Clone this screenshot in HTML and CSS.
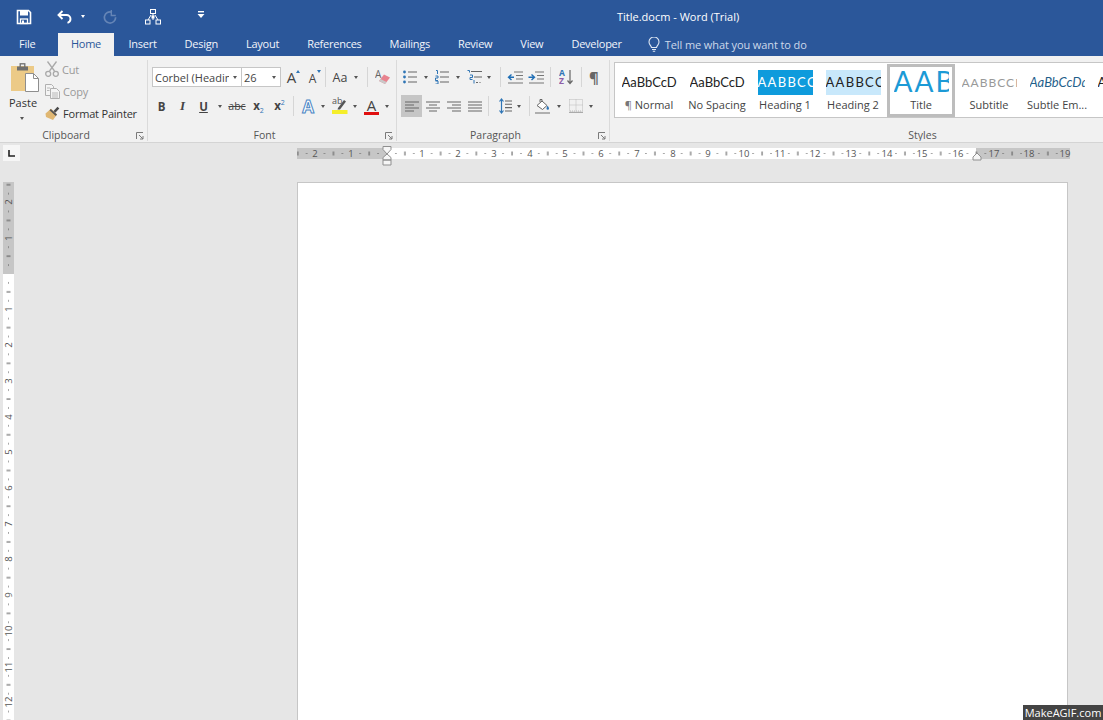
FILE: index.html
```html
<!DOCTYPE html>
<html lang="en">
<head>
<meta charset="utf-8">
<title>Title.docm - Word (Trial)</title>
<link rel="stylesheet" href="styles.css">
</head>
<body>
<div class="app">
  <header class="titlebar">
    <svg class="qa qa-save" width="16" height="16" viewBox="0 0 16 16"><path d="M1.5 1.5h11l2 2v11h-13z" fill="none" stroke="#fff" stroke-width="1.6"/><rect x="4" y="2" width="8" height="4.5" fill="#fff"/><rect x="4.5" y="10" width="7" height="4.5" fill="none" stroke="#fff" stroke-width="1.3"/><rect x="6" y="11.5" width="2" height="3" fill="#fff"/></svg>
    <svg class="qa qa-undo" width="16" height="14" viewBox="0 0 16 14"><path d="M5.5 1 1.5 5l4 4" fill="none" stroke="#fff" stroke-width="1.9"/><path d="M2 5h7.5a4 4 0 0 1 4 4v0a4 4 0 0 1-3 3.8" fill="none" stroke="#fff" stroke-width="1.9"/></svg>
    <span class="caret caret-white qa-undo-caret"></span>
    <svg class="qa qa-redo" width="14" height="14" viewBox="0 0 14 14"><path d="M9 2.2a5.6 5.6 0 1 0 3.6 5" fill="none" stroke="#6585b6" stroke-width="1.7"/><path d="M8.3 0v5.5h4.5" fill="none" stroke="#6585b6" stroke-width="1.4"/></svg>
    <svg class="qa qa-net" width="16" height="16" viewBox="0 0 16 16"><g fill="none" stroke="#fff"><rect x="5.5" y=".5" width="5" height="4"/><rect x=".5" y="11" width="4.5" height="4"/><rect x="11" y="11" width="4.5" height="4"/><path d="M8 4.5v6.5M3 11 6 6M13 11l-3-5"/></g><rect x="6.5" y="6.5" width="3" height="3" fill="#fff"/></svg>
    <svg class="qa qa-more" width="8" height="7" viewBox="0 0 8 7"><rect x="1" y="0" width="6" height="1.4" fill="#fff"/><path d="M.5 3h7L4 7z" fill="#fff"/></svg>
    <div class="doc-title">Title.docm - Word (Trial)</div>
  </header>

  <nav class="tabs">
    <span class="tab tab-file">File</span>
    <span class="tab tab-active">Home</span>
    <span class="tab">Insert</span>
    <span class="tab">Design</span>
    <span class="tab">Layout</span>
    <span class="tab">References</span>
    <span class="tab">Mailings</span>
    <span class="tab">Review</span>
    <span class="tab">View</span>
    <span class="tab">Developer</span>
    <span class="tell">
      <svg width="12" height="15" viewBox="0 0 12 15"><path d="M3.5 10.5C3 8.5 1 7.6 1 5a5 5 0 0 1 10 0c0 2.6-2 3.500-2.500 5.500z" fill="none" stroke="#dfe7f3" stroke-width="1.100"/><path d="M4 12.500h4M4.800 14.300h2.400" stroke="#dfe7f3" stroke-width="1.100"/></svg>
      <span>Tell me what you want to do</span>
    </span>
  </nav>

  <section class="ribbon">
    <div class="group group-clipboard">
      <div class="clip-body">
        <div class="paste">
          <svg width="30" height="30" viewBox="0 0 30 30"><rect x="1" y="3" width="23" height="25" fill="#ecca87"/><rect x="7" y="3.500" width="11" height="4" fill="#6f6f6f"/><rect x="10.200" y=".8" width="4.600" height="4" fill="none" stroke="#6f6f6f" stroke-width="1.300"/><path d="M15.500 10.500h8l5 5v13h-13z" fill="#fff" stroke="#8e8e8e"/><path d="M23.500 10.500v5h5" fill="none" stroke="#8e8e8e"/></svg>
          <span class="paste-label">Paste</span>
          <span class="caret caret-dark"></span>
        </div>
        <div class="clip-cmds">
          <div class="clip-row off">
            <svg width="14" height="16" viewBox="0 0 14 16"><g fill="none" stroke="#a9a9a9" stroke-width="1.300"><path d="M2.500 .5 9.500 10M11.500 .5 4.500 10"/><circle cx="3.200" cy="12.800" r="2.500"/><circle cx="10.800" cy="12.800" r="2.500"/></g></svg>
            <span>Cut</span>
          </div>
          <div class="clip-row off">
            <svg width="15" height="15" viewBox="0 0 15 15"><g fill="#f4f4f4" stroke="#b0b0b0"><path d="M.5 .5h6l2 2v9h-8z"/><path d="M5.500 4.500h6l3 3v7h-9z"/></g><path d="M2 4h3M2 6.500h2.500M7 9h6M7 11h6M7 13h6" stroke="#b8b8b8"/></svg>
            <span>Copy</span>
          </div>
          <div class="clip-row">
            <svg width="15" height="15" viewBox="0 0 15 15"><path d="M8.500 5 12.500 .8l1.800 1.800-4 4.200z" fill="#4a4a4a"/><path d="M6 2.800 12 8.500 8 14 1 11 .5 7.500z" fill="#e0b772"/><path d="M5.800 3 12 8.600 10.800 10 4.500 4.300z" fill="#555"/></svg>
            <span>Format Painter</span>
          </div>
        </div>
      </div>
      <div class="group-label">Clipboard
        <svg class="launcher" width="8" height="8" viewBox="0 0 8 8"><path d="M.5 7V.5H7M3 3l4 4M7 4v3H4" fill="none" stroke="#7a7a7a"/></svg>
      </div>
    </div>

    <div class="group group-font">
      <div class="rows">
        <div class="row row-top">
          <div class="combo combo-name"><span class="combo-text">Corbel (Headings)</span><span class="caret caret-dark"></span></div>
          <div class="combo combo-size"><span class="combo-text">26</span><span class="caret caret-dark"></span></div>
          <span class="glyph size-a w21">A<i class="tri tri-up"></i></span>
          <span class="glyph size-b w21">A<i class="tri tri-down"></i></span>
          <i class="sep sep-a"></i>
          <span class="glyph aa">Aa</span><span class="caret caret-dark"></span>
          <i class="sep sep-b"></i>
          <svg class="eraser" width="16" height="16" viewBox="0 0 16 16"><text x="0" y="9" class="mini-a">A</text><path d="M9 5.500 15 8.500 10 15 4 12z" fill="#e8838f"/><path d="M4 12l6 3 1.500-2-6-3z" fill="#c9c9c9"/></svg>
        </div>
        <div class="row row-bottom">
          <span class="glyph fmt w21 bold">B</span>
          <span class="glyph fmt w21 ital">I</span>
          <span class="glyph fmt w21 under">U</span>
          <span class="cw"><span class="caret caret-dark"></span></span>
          <span class="glyph abc">abc</span>
          <span class="script w21">x<sub>2</sub></span>
          <span class="script w21">x<sup>2</sup></span>
          <i class="sep sep-c"></i>
          <span class="glyph effect">A</span><span class="cw"><span class="caret caret-dark"></span></span>
          <svg class="hl" width="18" height="18" viewBox="0 0 18 18"><text x="1" y="7" class="mini-ab">ab</text><path d="M7 11 13 3l2 1.500-6 8H6.500z" fill="#555"/><rect x="1" y="13" width="15.500" height="4" fill="#f5ee2a"/></svg>
          <span class="cw"><span class="caret caret-dark"></span></span>
          <span class="glyph fontcolor">A</span><span class="cw"><span class="caret caret-dark"></span></span>
        </div>
      </div>
      <div class="group-label">Font
        <svg class="launcher" width="8" height="8" viewBox="0 0 8 8"><path d="M.5 7V.5H7M3 3l4 4M7 4v3H4" fill="none" stroke="#7a7a7a"/></svg>
      </div>
    </div>

    <div class="group group-para">
      <div class="rows">
        <div class="row row-top">
          <svg class="p-icon m6" width="14" height="14" viewBox="0 0 14 14"><path d="M5 2h9M5 7h9M5 12h9" stroke="#666" stroke-width="1.200"/><g fill="#2f75b5"><circle cx="1.500" cy="2" r="1.400"/><circle cx="1.500" cy="7" r="1.400"/><circle cx="1.500" cy="12" r="1.400"/></g></svg>
          <span class="cw c1"><span class="caret caret-dark"></span></span>
          <svg class="p-icon" width="14" height="14" viewBox="0 0 14 14"><path d="M5 2h9M5 7h9M5 12h9" stroke="#666" stroke-width="1.200"/><g stroke="#2f75b5" fill="none"><path d="M1 .5h1.500v3.500M.5 6h2.500v2H.5v2.500H3M.5 11h2.500v3H.5"/></g></svg>
          <span class="cw c1"><span class="caret caret-dark"></span></span>
          <svg class="p-icon" width="15" height="14" viewBox="0 0 15 14"><path d="M4 1.500h11M7 7h8M9 12.500h2M12.500 12.500h1" stroke="#666" stroke-width="1.200"/><path d="M.5 .5h2v2M3 5h2.500v2.500H3v2h2.500M7 10v3.500" stroke="#2f75b5" fill="none"/></svg>
          <span class="cw c0"><span class="caret caret-dark"></span></span>
          <i class="sep sep-d"></i>
          <svg class="p-icon" width="16" height="13" viewBox="0 0 16 13"><path d="M7 1h9M9 4.500h7M9 8h7M1 12h15" stroke="#777" stroke-width="1.200"/><path d="M7 6.200H2M4.500 3.500 1.500 6.200l3 2.800" fill="none" stroke="#1f6eb5" stroke-width="1.400"/></svg>
          <svg class="p-icon m5" width="16" height="13" viewBox="0 0 16 13"><path d="M7 1h9M9 4.500h7M9 8h7M1 12h15" stroke="#777" stroke-width="1.200"/><path d="M.5 6.200h5M3.500 3.500l3 2.700-3 2.800" fill="none" stroke="#1f6eb5" stroke-width="1.400"/></svg>
          <i class="sep sep-e"></i>
          <svg class="p-icon" width="14" height="16" viewBox="0 0 14 16"><text x="0" y="7" class="az az-a">A</text><text x="0" y="15" class="az az-z">Z</text><path d="M11 1v13M8.500 11.500 11 14.500l2.500-3" fill="none" stroke="#666" stroke-width="1.200"/></svg>
          <i class="sep sep-f"></i>
          <span class="pilcrow">¶</span>
        </div>
        <div class="row row-bottom">
          <span class="al al-on"><svg width="14" height="11" viewBox="0 0 14 11"><path d="M0 1h14M0 4h9M0 7h14M0 10h9" stroke="#666" stroke-width="1.100"/></svg></span>
          <span class="al"><svg width="14" height="11" viewBox="0 0 14 11"><path d="M0 1h14M3 4h8M0 7h14M3 10h8" stroke="#666" stroke-width="1.100"/></svg></span>
          <span class="al"><svg width="14" height="11" viewBox="0 0 14 11"><path d="M0 1h14M5 4h9M0 7h14M5 10h9" stroke="#666" stroke-width="1.100"/></svg></span>
          <span class="al"><svg width="14" height="11" viewBox="0 0 14 11"><path d="M0 1h14M0 4h14M0 7h14M0 10h14" stroke="#666" stroke-width="1.100"/></svg></span>
          <i class="sep sep-g"></i>
          <svg class="p-icon" width="13" height="16" viewBox="0 0 13 16"><path d="M6 3h7M6 6.300h7M6 9.600h7M6 13h7" stroke="#666" stroke-width="1.100"/><path d="M2.500 1v14M.5 3.500l2-2.500 2 2.500M.5 12.500l2 2.500 2-2.500" fill="none" stroke="#2f75b5" stroke-width="1.200"/></svg>
          <span class="cw c2"><span class="caret caret-dark"></span></span>
          <i class="sep sep-h"></i>
          <svg class="p-icon" width="16" height="16" viewBox="0 0 16 16"><path d="M2 7.500 7 3l5 4.500-4.500 4z" fill="#fff" stroke="#666"/><path d="M5 4V1.500h2V4" fill="none" stroke="#666"/><path d="M12.500 7.500c1 1.500 1.500 2.200 1.500 3a1 1 0 0 1-2.500 0c0-.8.500-1.500 1-3z" fill="#2f75b5"/><path d="M0 15h15" stroke="#999" stroke-width="1.500"/></svg>
          <span class="cw c3"><span class="caret caret-dark"></span></span>
          <svg class="p-icon" width="14" height="14" viewBox="0 0 14 14"><g fill="none" stroke="#bbb" stroke-dasharray="1 1"><rect x=".5" y=".5" width="13" height="11.500"/><path d="M7 .5v11.500M.5 6h13"/></g><path d="M0 13.300h14" stroke="#999"/></svg>
          <span class="cw c3"><span class="caret caret-dark"></span></span>
        </div>
      </div>
      <div class="group-label">Paragraph
        <svg class="launcher" width="8" height="8" viewBox="0 0 8 8"><path d="M.5 7V.5H7M3 3l4 4M7 4v3H4" fill="none" stroke="#7a7a7a"/></svg>
      </div>
    </div>

    <div class="group group-styles">
      <div class="gallery">
        <div class="style"><div class="pv pv-body">AaBbCcD</div><div class="st-label"><span class="pil">¶</span> Normal</div></div>
        <div class="style"><div class="pv pv-body">AaBbCcD</div><div class="st-label">No Spacing</div></div>
        <div class="style"><div class="pv pv-h1">AABBCC</div><div class="st-label">Heading 1</div></div>
        <div class="style"><div class="pv pv-h2">AABBCC</div><div class="st-label">Heading 2</div></div>
        <div class="style style-on"><div class="pv pv-title">AAB</div><div class="st-label">Title</div></div>
        <div class="style"><div class="pv pv-sub">AABBCCDD</div><div class="st-label">Subtitle</div></div>
        <div class="style"><div class="pv pv-em">AaBbCcDd</div><div class="st-label">Subtle Em...</div></div>
        <div class="style"><div class="pv pv-body pv-last">A</div></div>
      </div>
      <div class="group-label">Styles</div>
    </div>
  </section>

  <div class="rulerbar">
    <div class="tabstop"><svg width="7" height="7" viewBox="0 0 7 7"><path d="M1 0v6h6" fill="none" stroke="#222" stroke-width="1.600"/></svg></div>
    <svg class="hruler" width="813" height="24" viewBox="0 0 813 24">
      <defs>
        <pattern id="hticks" patternUnits="userSpaceOnUse" x="97" y="5" width="35.72" height="11">
          <rect x="8.400" y="5" width="1" height="1" fill="#555"/>
          <rect x="17.400" y="3.500" width="1" height="4" fill="#555"/>
          <rect x="26.300" y="5" width="1" height="1" fill="#555"/>
        </pattern>
      </defs>
      <rect x="7" y="5" width="90" height="11" fill="#c6c6c6"/>
      <rect x="97" y="5" width="589" height="11" fill="#fff"/>
      <rect x="686" y="5" width="94" height="11" fill="#c6c6c6"/>
      <rect x="7" y="5" width="773" height="11" fill="url(#hticks)"/>
      <g class="rnum" text-anchor="middle">
        <text x="25" y="14">2</text><text x="61" y="14">1</text><text x="132" y="14">1</text><text x="168" y="14">2</text><text x="204" y="14">3</text><text x="240" y="14">4</text><text x="275" y="14">5</text><text x="311" y="14">6</text><text x="347" y="14">7</text><text x="383" y="14">8</text><text x="418" y="14">9</text><text x="454" y="14">10</text><text x="490" y="14">11</text><text x="525" y="14">12</text><text x="561" y="14">13</text><text x="597" y="14">14</text><text x="632" y="14">15</text><text x="668" y="14">16</text><text x="704" y="14">17</text><text x="739" y="14">18</text><text x="775" y="14">19</text>
      </g>
      <path d="M93 3.500h8v3l-4 4.500-4-4.500z M93 17v-2.500l4-3.500 4 3.500V17z M93 17h8v5h-8z" fill="#f6f6f6" stroke="#8f8f8f"/>
      <path d="M683 17v-3l4-4 4 4v3z" fill="#f6f6f6" stroke="#8f8f8f"/>
    </svg>
  </div>

  <main class="workspace">
    <svg class="vruler" width="11" height="538" viewBox="0 0 11 538">
      <defs>
        <pattern id="vticks" patternUnits="userSpaceOnUse" x="0" y="92" width="11" height="35.72">
          <rect x="5" y="8.400" width="1" height="1" fill="#555"/>
          <rect x="3.500" y="17.400" width="4" height="1" fill="#555"/>
          <rect x="5" y="26.300" width="1" height="1" fill="#555"/>
        </pattern>
      </defs>
      <rect width="11" height="92" fill="#c6c6c6"/>
      <rect y="92" width="11" height="446" fill="#fff"/>
      <rect width="11" height="538" fill="url(#vticks)"/>
      <g class="rnum" text-anchor="middle">
        <text transform="translate(9 20) rotate(-90)">2</text><text transform="translate(9 56) rotate(-90)">1</text><text transform="translate(9 127) rotate(-90)">1</text><text transform="translate(9 163) rotate(-90)">2</text><text transform="translate(9 199) rotate(-90)">3</text><text transform="translate(9 235) rotate(-90)">4</text><text transform="translate(9 270) rotate(-90)">5</text><text transform="translate(9 306) rotate(-90)">6</text><text transform="translate(9 342) rotate(-90)">7</text><text transform="translate(9 377) rotate(-90)">8</text><text transform="translate(9 413) rotate(-90)">9</text><text transform="translate(9 449) rotate(-90)">10</text><text transform="translate(9 485) rotate(-90)">11</text><text transform="translate(9 520) rotate(-90)">12</text>
      </g>
    </svg>
    <div class="page"></div>
  </main>
  <div class="watermark">MakeAGIF.com</div>
</div>
</body>
</html>
```

FILE: styles.css
```css
* { box-sizing: border-box; }
html, body { margin: 0; padding: 0; }
body { width: 1103px; height: 720px; overflow: hidden; font-family: "Open Sans", "Noto Sans", sans-serif; color: #444; background: #e6e6e6; }
.app { position: relative; width: 1103px; height: 720px; overflow: hidden; }

/* title bar */
.titlebar { height: 33px; background: #2b579a; display: flex; align-items: center; }
.qa { display: block; flex: none; }
.qa-save { margin-left: 16px; }
.qa-undo { margin-left: 25px; }
.qa-undo-caret { margin-left: 8px; }
.qa-redo { margin-left: 18px; }
.qa-net { margin-left: 28px; }
.qa-more { margin-left: 36px; margin-top: -5px; }
.doc-title { margin-left: 412px; color: #fff; font-size: 11px; white-space: nowrap; }

/* tabs */
.tabs { height: 23px; background: #2b579a; display: flex; align-items: stretch; padding-left: 5px; color: #f2f5fa; font-size: 11px; letter-spacing: -0.25px; }
.tab { padding: 0 14px; line-height: 22px; white-space: nowrap; }
.tab-file { padding-right: 23px; }
.tab-active { background: #f1f1f1; color: #2b579a; padding: 0 12.500px; width: 56px; }
.tell { display: flex; align-items: center; gap: 5px; margin-left: 12px; color: #cdd9ea; letter-spacing: -0.1px; }

/* ribbon */
.ribbon { height: 87px; background: #f1f1f1; border-bottom: 1px solid #d4d4d4; display: flex; align-items: flex-start; padding-top: 4px; font-size: 11px; }
.group { height: 81px; display: flex; flex-direction: column; border-right: 1px solid #dadada; flex: none; }
.group-clipboard { width: 148px; }
.group-font { width: 249px; }
.group-para { width: 213px; }
.group-styles { flex: 1; min-width: 0; border-right: 0; overflow: hidden; }
.group-label { margin-top: auto; height: 15px; line-height: 19px; padding-right: 15px; text-align: center; font-size: 10.500px; color: #555; position: relative; }
.group-styles .group-label { padding: 0 0 0 132px; }
.launcher { position: absolute; right: 3px; top: 6px; }

.clip-body { display: flex; }
.paste { width: 45px; padding: 3px 0 0 10px; display: flex; flex-direction: column; align-items: flex-start; }
.paste svg { display: block; }
.paste-label { width: 26px; margin-left: -1px; text-align: center; font-size: 11px; color: #333; line-height: 14px; margin-top: 3px; }
.paste .caret { margin: 7px 0 0 10px; }
.clip-cmds { display: flex; flex-direction: column; gap: 4px; }
.clip-row { height: 18px; display: flex; align-items: center; gap: 3px; font-size: 11px; letter-spacing: -0.2px; color: #333; white-space: nowrap; }
.clip-row svg { flex: none; }
.off { color: #999; }

.caret { display: inline-block; width: 0; height: 0; border-left: 2.500px solid transparent; border-right: 2.500px solid transparent; border-top: 3px solid #555; flex: none; }
.caret-white { border-top-color: #fff; }

.rows { padding-top: 7px; }
.row { display: flex; align-items: center; }
.row-top { height: 20px; }
.row-bottom { height: 22px; margin-top: 8px; }
.group-font .rows { padding-left: 4px; }
.group-font .row-bottom { margin-left: -1px; }

.combo { height: 20px; background: #fff; border: 1px solid #c6c6c6; display: flex; align-items: center; overflow: hidden; font-size: 11px; color: #444; flex: none; }
.combo-text { overflow: hidden; white-space: nowrap; flex: 1; padding-left: 2px; }
.combo .caret { margin: 0 4px 0 4px; }
.combo-name { width: 90px; }
.combo-size { width: 40px; margin-left: -1px; }

.glyph { display: flex; align-items: center; justify-content: center; flex: none; position: relative; color: #444; }
.w21 { width: 21px; height: 22px; }
.size-a { font-size: 15px; }
.size-b { font-size: 12px; padding-top: 2px; }
.tri { position: absolute; top: 4px; right: 2px; width: 0; height: 0; border-left: 2.500px solid transparent; border-right: 2.500px solid transparent; }
.tri-up { border-bottom: 3px solid #2f75b5; }
.tri-down { border-top: 3px solid #2f75b5; }
.sep { display: block; width: 1px; height: 20px; background: #d6d6d6; flex: none; }
.sep-a { margin-left: 2px; }
.aa { font-size: 12.500px; width: 18px; margin-left: 5px; }
.row-top > .aa + .caret { margin-left: 5px; }
.sep-b { margin-left: 9px; }
.eraser { margin-left: 7px; flex: none; }
.mini-a { font-size: 10px; fill: #666; font-family: "Open Sans", sans-serif; }

.fmt { font-size: 11.500px; }
.bold { font-weight: 700; }
.ital { font-style: italic; font-family: "Liberation Serif", serif; font-size: 13px; font-weight: 700; }
.under { text-decoration: underline; font-weight: 700; }
.cw { width: 11px; display: flex; justify-content: center; flex: none; }
.abc { width: 22px; font-size: 10.500px; text-decoration: line-through; margin-left: 1px; }
.script { display: block; flex: none; text-align: center; line-height: 22px; font-size: 11.500px; font-weight: 700; color: #444; }
.script sub, .script sup { font-size: 7px; color: #2f75b5; line-height: 0; font-weight: 400; }
.sep-c { margin-left: 3px; }
.effect { width: 18px; margin-left: 5px; font-size: 17px; font-weight: 700; color: #fff; -webkit-text-stroke: 1px #4a86c5; }
.hl { margin-left: 3px; flex: none; }
.mini-ab { font-size: 9px; fill: #555; font-family: "Open Sans", sans-serif; }
.fontcolor { width: 15px; margin: 0 2px 0 4px; font-size: 15px; font-weight: 400; border-bottom: 3px solid #e01010; height: 18px; line-height: 14px; }

.group-para .p-icon { display: block; flex: none; }
.m6 { margin-left: 6px; }
.m5 { margin-left: 5px; }
.c1 { width: 18px; margin-left: 0; }
.c0 { width: 14px; }
.c2 { width: 13px; }
.c3 { width: 16px; }
.sep-d { margin-left: 4px; margin-right: 6px; }
.sep-e { margin-left: 6px; margin-right: 8px; }
.sep-f { margin-left: 8px; }
.az { font-size: 8.500px; font-weight: 700; font-family: "Open Sans", sans-serif; }
.az-a { fill: #2f75b5; }
.az-z { fill: #8e5fa8; }
.pilcrow { margin-left: 6px; font-size: 15px; font-weight: 700; color: #666; width: 12px; text-align: center; }
.al { width: 21px; height: 22px; display: flex; align-items: center; justify-content: center; flex: none; }
.al-on { background: #c6c6c6; }
.group-para .row-bottom { padding-left: 4px; }
.sep-g { margin-left: 3px; margin-right: 10px; }
.sep-h { margin-left: 4px; margin-right: 5px; }
.group-para .row-bottom .c3 + .p-icon { margin-left: 2px; }

/* styles gallery */
.gallery { margin: 2px 0 0 4px; height: 56px; background: #fff; border: 1px solid #c6c6c6; border-right: 0; display: flex; overflow: hidden; padding-top: 1px; }
.style { width: 68px; height: 53px; flex: none; padding-top: 6px; text-align: center; overflow: hidden; }
.style-on { box-shadow: inset 0 0 0 3px #bdbdbd; }
.pv { height: 25px; line-height: 25px; margin: 0 6.500px; overflow: hidden; white-space: nowrap; font-family: Lato, "Open Sans", sans-serif; text-align: left; }
.pv-body { font-size: 13px; color: #222; text-align: center; }
.pv-h1 { background: #0e9bdc; color: #fff; font-size: 13px; letter-spacing: 1.300px; }
.pv-h2 { background: #c8e8fb; color: #222; font-size: 13px; letter-spacing: 1.300px; }
.pv-title { color: #1c9ad6; font-size: 28px; font-weight: 400; letter-spacing: 2px; line-height: 22px; }
.pv-sub { color: #999; font-size: 12px; letter-spacing: 1px; }
.pv-em { color: #1f5f8b; font-style: italic; font-size: 13px; }
.pv-last { text-align: left; }
.st-label { margin-top: 2px; line-height: 16px; font-size: 11px; color: #444; white-space: nowrap; }
.pil { color: #777; }

/* ruler bar */
.rulerbar { height: 22px; background: #e6e6e6; display: flex; align-items: flex-start; }
.tabstop { width: 17px; height: 16px; margin: 2px 0 0 3px; background: #f6f6f6; display: flex; align-items: center; justify-content: center; flex: none; }
.hruler { display: block; margin-left: 270px; flex: none; }
.rnum { font-family: "Open Sans", sans-serif; font-size: 9.500px; fill: #555; }

/* document area */
.workspace { height: 555px; padding: 17px 0 0 3px; display: flex; align-items: flex-start; overflow: hidden; background: #e6e6e6; }
.vruler { display: block; flex: none; }
.page { margin-left: 283px; width: 771px; height: 560px; background: #fff; border: 1px solid #c6c6c6; flex: none; }
.watermark { position: absolute; right: 0; bottom: 0; width: 80px; height: 15px; background: #444; color: #fff; font-size: 11px; line-height: 15px; text-align: center; white-space: nowrap; }
```
